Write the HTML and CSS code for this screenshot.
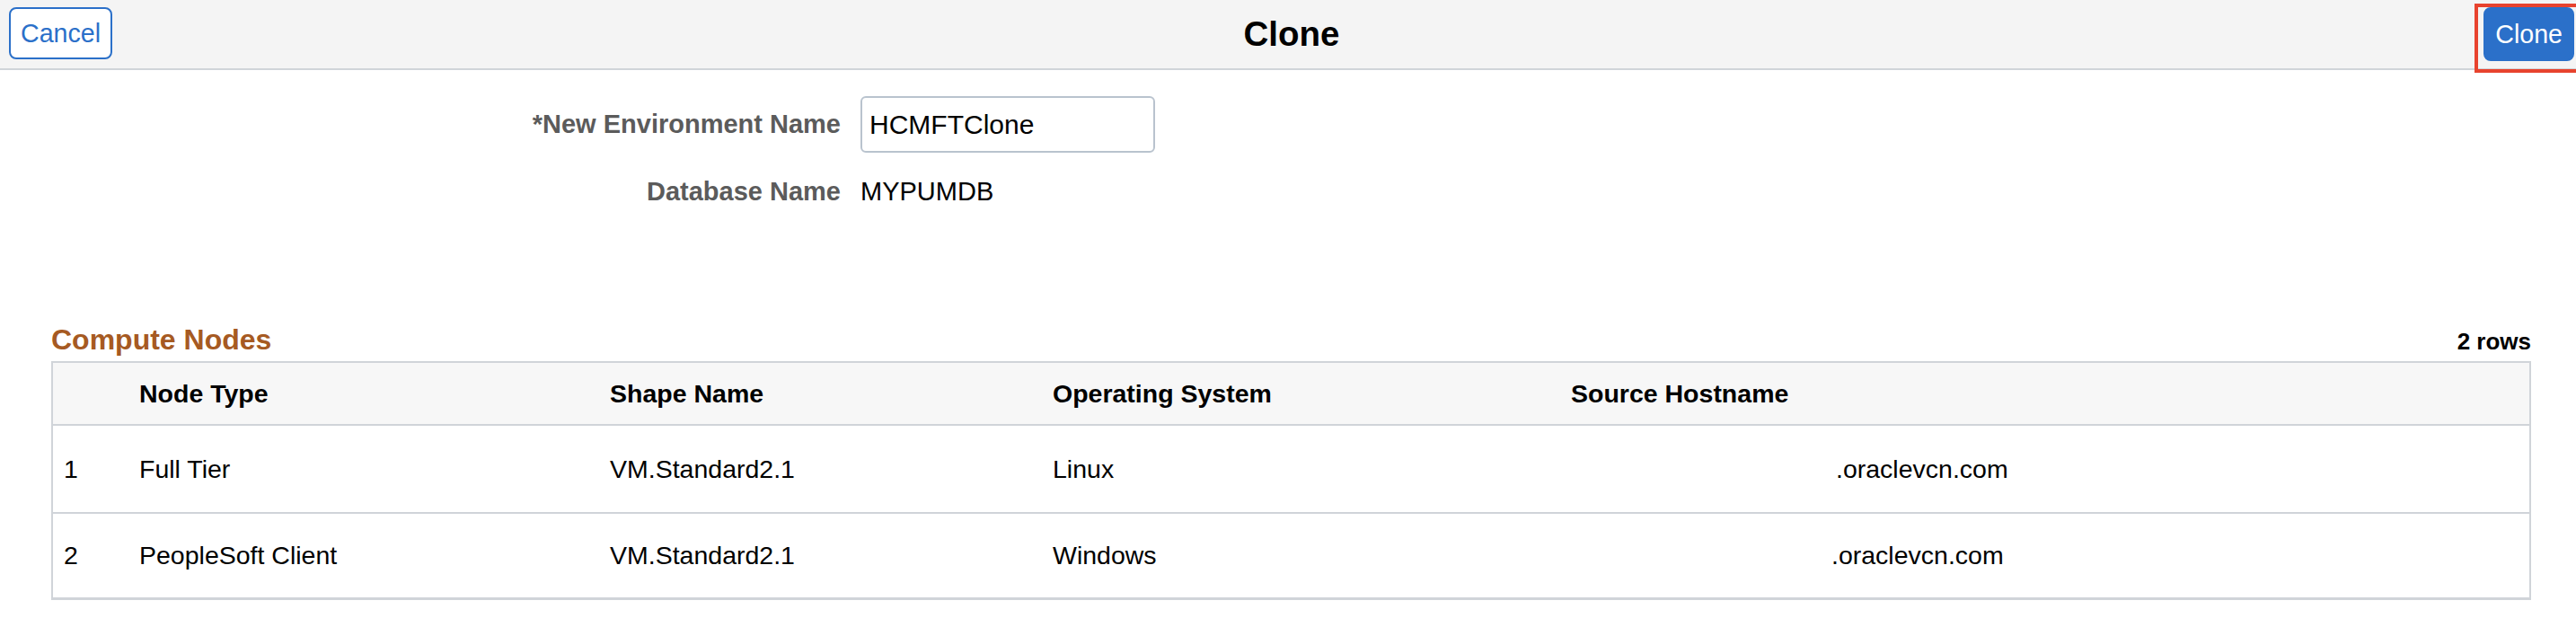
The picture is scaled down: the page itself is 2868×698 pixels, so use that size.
FILE: index.html
```html
<!DOCTYPE html>
<html lang="en">
<head>
    <meta charset="UTF-8">
    <meta name="viewport" content="width=device-width, initial-scale=1.0">
    <title>Clone</title>
    <link rel="stylesheet" href="styles.css">
</head>
<body>
    <header class="topbar">
        <div class="topbar-left">
            <button class="btn btn-outline">Cancel</button>
        </div>
        <h1 class="title">Clone</h1>
        <div class="topbar-right">
            <span class="marked">
                <button class="btn btn-primary">Clone</button>
            </span>
        </div>
    </header>

    <main>
        <div class="form">
            <label class="field-label" for="envname">*New Environment Name</label>
            <div class="field-value">
                <input id="envname" class="text-input" type="text" value="HCMFTClone">
            </div>
            <div class="field-label">Database Name</div>
            <div class="field-value field-text">MYPUMDB</div>
        </div>

        <section class="grid-section">
            <div class="grid-head">
                <h2 class="grid-title">Compute Nodes</h2>
                <span class="row-count">2 rows</span>
            </div>
            <table class="grid">
                <thead>
                    <tr>
                        <th class="col-num"></th>
                        <th class="col-type">Node Type</th>
                        <th class="col-shape">Shape Name</th>
                        <th class="col-os">Operating System</th>
                        <th>Source Hostname</th>
                    </tr>
                </thead>
                <tbody>
                    <tr class="row-first">
                        <td>1</td>
                        <td>Full Tier</td>
                        <td>VM.Standard2.1</td>
                        <td>Linux</td>
                        <td class="host">.oraclevcn.com</td>
                    </tr>
                    <tr class="row-last">
                        <td>2</td>
                        <td>PeopleSoft Client</td>
                        <td>VM.Standard2.1</td>
                        <td>Windows</td>
                        <td class="host host-short">.oraclevcn.com</td>
                    </tr>
                </tbody>
            </table>
        </section>
    </main>
</body>
</html>
```

FILE: styles.css
```css
html, body {
    overflow: hidden;
}
body {
    margin: 0;
    font-family: "Liberation Sans", Arial, sans-serif;
    background-color: #ffffff;
    color: #000000;
}
.topbar {
    display: grid;
    grid-template-columns: 1fr auto 1fr;
    align-items: center;
    height: 76px;
    padding: 0 2px 0 10px;
    background-color: #f4f4f4;
    border-bottom: 2px solid #d0d4d9;
}
.topbar-right {
    justify-self: end;
}
.title {
    margin: 0;
    font-size: 38.5px;
    font-weight: bold;
}
.btn {
    height: 58px;
    padding: 0 11px;
    font-family: "Liberation Sans", Arial, sans-serif;
    font-size: 28.6px;
    border: 2px solid #2b70c9;
    border-radius: 8px;
    cursor: pointer;
}
.btn-outline {
    background-color: #ffffff;
    color: #2b70c9;
    margin-top: -2px;
}
.btn-primary {
    height: 60px;
    background-color: #2b70c9;
    color: #ffffff;
    display: block;
}
.marked {
    position: relative;
    display: block;
}
.marked::after {
    content: "";
    position: absolute;
    left: -10px;
    top: -4px;
    right: -8px;
    bottom: -13px;
    border: 4px solid #e8432e;
}
.form {
    display: grid;
    grid-template-columns: 936px auto;
    column-gap: 22px;
    row-gap: 23px;
    align-items: center;
    margin-top: 29px;
}
.field-label {
    text-align: right;
    font-size: 29px;
    font-weight: bold;
    color: #5b5b5b;
}
.field-value {
    font-size: 29px;
}
.field-text {
    line-height: 40px;
}
.text-input {
    box-sizing: border-box;
    width: 328px;
    height: 63px;
    padding: 0 8px;
    font-family: "Liberation Sans", Arial, sans-serif;
    font-size: 30px;
    color: #000000;
    border: 2px solid #b9c3ce;
    border-radius: 6px;
    display: block;
}
.grid-section {
    margin-top: 127px;
    padding: 0 50px 0 57px;
}
.grid-head {
    display: flex;
    justify-content: space-between;
    align-items: baseline;
}
.grid-title {
    margin: 0;
    font-size: 32px;
    line-height: 36px;
    font-weight: bold;
    color: #a65a22;
}
.row-count {
    font-size: 26px;
    line-height: 30px;
    font-weight: bold;
}
.grid {
    width: 100%;
    margin-top: 6px;
    table-layout: fixed;
    border-collapse: separate;
    border-spacing: 0;
    border: 2px solid #d0d4d9;
    border-bottom-width: 3px;
    font-size: 28.5px;
}
.grid th,
.grid td {
    padding: 0 12px;
    text-align: left;
    vertical-align: middle;
    white-space: nowrap;
}
.grid th {
    height: 68px;
    background-color: #f7f7f7;
    font-weight: bold;
    border-bottom: 2px solid #d0d4d9;
}
.row-first td {
    height: 96px;
    border-bottom: 2px solid #d0d4d9;
}
.row-last td {
    height: 93px;
}
.col-num {
    width: 60px;
}
.col-type {
    width: 500px;
}
.col-shape {
    width: 469px;
}
.col-os {
    width: 553px;
}
.host {
    padding-left: 307px !important;
}
.host-short {
    padding-left: 302px !important;
}
```
